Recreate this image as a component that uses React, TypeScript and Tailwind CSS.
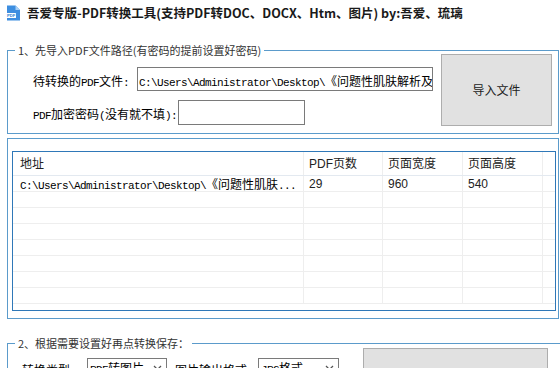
import React from 'react';

// SimSun-like run: half-width ASCII in mono (6px cells), CJK at 12px
function Song({ text, className = '' }: { text: string; className?: string }) {
  const parts = text.match(/[\x00-\x7f]+|[^\x00-\x7f]+/g) || [];
  return (
    <span className={`whitespace-pre ${className}`}>
      {parts.map((p, i) =>
        /^[\x00-\x7f]/.test(p) ? (
          <span key={i} className="font-['Liberation_Mono',monospace] text-[11px] tracking-[-0.6px]">{p}</span>
        ) : (
          <span key={i} className="font-['Noto_Sans_CJK_SC',sans-serif] text-[12px]">{p}</span>
        )
      )}
    </span>
  );
}

function PdfIcon() {
  return (
    <svg width="15" height="16" viewBox="0 0 15 16">
      <path d="M1 0.5h8.5l4.5 4.5v10.5h-13z" fill="#3d8ee0" />
      <path d="M9.5 0.5v4.5h4.5z" fill="#a9d0f5" />
      <rect x="0" y="8" width="10" height="5" rx="0.5" fill="#ffffff" />
      <text x="1" y="12" fontSize="4.2" fontWeight="bold" fill="#2f7fd0" fontFamily="Liberation Sans, sans-serif">PDF</text>
    </svg>
  );
}

function Legend({ children }: { children: React.ReactNode }) {
  return (
    <span className="absolute left-[7px] -top-[9px] bg-white px-[3px] text-[11px] leading-[16px] text-[#333] whitespace-nowrap">
      {children}
    </span>
  );
}

function Select({ value, width }: { value: string; width: string }) {
  return (
    <div className={`${width} h-[20px] border border-[#7a7a7a] bg-white flex items-center justify-between pl-[2px] pr-[4px]`}>
      <Song text={value} className="leading-[18px] text-black" />
      <svg width="9" height="6" viewBox="0 0 9 6">
        <polyline points="1,1 4.5,4.5 8,1" fill="none" stroke="#555" strokeWidth="1.3" />
      </svg>
    </div>
  );
}

const cols = ['w-[291px]', 'w-[79px]', 'w-[80px]', 'w-[80px]'];

function Row({ cells, header }: { cells: string[]; header?: boolean }) {
  return (
    <div className={`flex ${header ? 'h-[24px] border-b border-[#e3e9f0]' : 'h-[16px] border-b border-[#eeeeee]'}`}>
      {cols.map((w, i) => (
        <div
          key={i}
          className={`${w} shrink-0 border-r border-[#eeeeee] flex items-center ${i === 0 ? 'pl-[7px]' : 'pl-[5px]'} overflow-hidden whitespace-nowrap`}
        >
          {i === 0 && !header ? (
            <Song text={cells[i] || ''} className="text-black leading-[16px]" />
          ) : (
            <span className="font-['Liberation_Sans','Noto_Sans_CJK_SC',sans-serif] text-[12px] text-[#222]">{cells[i] || ''}</span>
          )}
        </div>
      ))}
      <div className="flex-1" />
    </div>
  );
}

export default function App() {
  const rows = Array.from({ length: 8 }, (_, i) =>
    i === 0 ? ['C:\\Users\\Administrator\\Desktop\\《问题性肌肤...', '29', '960', '540'] : ['', '', '', '']
  );

  return (
    <div className="w-[560px] h-[368px] overflow-hidden bg-white font-['Noto_Sans_CJK_SC',sans-serif]">
      {/* Title */}
      <div className="h-[26px] flex items-center pl-[6px] gap-[6px]">
        <PdfIcon />
        <span className="text-[12.5px] font-bold text-[#1a1a1a] whitespace-nowrap">
          吾爱专版-PDF转换工具(支持PDF转DOC、DOCX、Htm、图片) by:吾爱、琉璃
        </span>
      </div>

      {/* Group 1 */}
      <div className="mt-[24px] ml-[7px] w-[552px] h-[84px] border border-[#5b9bcb] relative flex items-start">
        <Legend>1、先导入PDF文件路径(有密码的提前设置好密码)</Legend>
        <div className="ml-[25px] mt-[16px]">
          <div className="flex items-center h-[24px]">
            <Song text="待转换的PDF文件:" className="w-[104px] text-black" />
            <div className="w-[296px] h-[24px] border border-[#7a7a7a] pl-[1px] flex items-center overflow-hidden">
              <Song text="C:\Users\Administrator\Desktop\《问题性肌肤解析及" className="text-black" />
            </div>
          </div>
          <div className="flex items-center h-[25px] mt-[9px]">
            <Song text="PDF加密密码(没有就不填):" className="w-[145px] text-black" />
            <div className="w-[127px] h-[25px] border border-[#7a7a7a]" />
          </div>
        </div>
        <button className="ml-[8px] mt-[3px] w-[111px] h-[72px] bg-[#e1e1e1] border border-[#adadad] text-[12px] text-[#222] flex items-center justify-center">
          导入文件
        </button>
      </div>

      {/* List group */}
      <div className="mt-[4px] ml-[7px] w-[552px] h-[181px] border border-[#5b9bcb] pt-[12px] pl-[4px]">
        <div className="w-[544px] h-[160px] border border-[#2f78b8] overflow-hidden bg-white">
          <Row header cells={['地址', 'PDF页数', '页面宽度', '页面高度']} />
          {rows.map((r, i) => (
            <Row key={i} cells={r} />
          ))}
        </div>
      </div>

      {/* Group 2 */}
      <div className="mt-[24px] ml-[7px] w-[600px] h-[80px] border border-[#5b9bcb] relative flex items-start">
        <Legend>2、根据需要设置好再点转换保存：</Legend>
        <div className="ml-[14px] mt-[14px] flex items-center h-[20px]">
          <Song text="转换类型:" className="w-[65px] text-black" />
          <Select value="PDF转图片" width="w-[80px]" />
          <Song text="图片输出格式:" className="ml-[8px] w-[83px] text-black" />
          <Select value="JPG格式" width="w-[81px]" />
        </div>
        <button className="ml-[24px] mt-[4px] w-[185px] h-[60px] bg-[#e1e1e1] border border-[#adadad]" />
      </div>
    </div>
  );
}
